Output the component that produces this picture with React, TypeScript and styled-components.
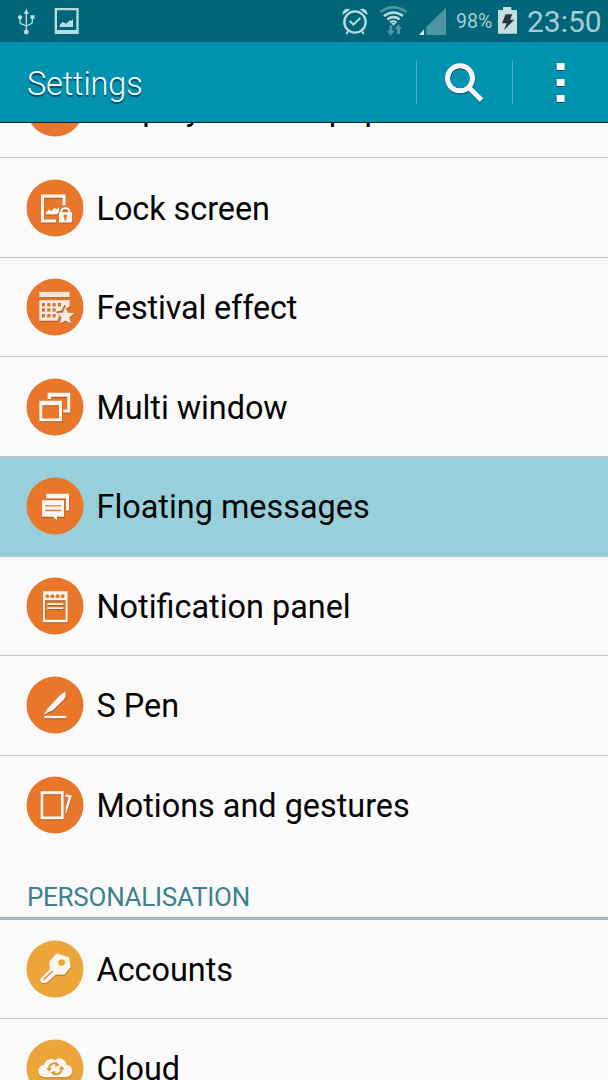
import React from 'react';
import styled, { createGlobalStyle } from 'styled-components';

const Global = createGlobalStyle`
  * { box-sizing: border-box; }
  html, body { margin: 0; padding: 0; overflow: hidden; background: #fafafa; }
  body { font-family: Roboto, "Noto Sans", sans-serif; }
`;

const Screen = styled.div`
  width: 608px;
  height: 1080px;
  display: flex;
  flex-direction: column;
  overflow: hidden;
  background: #fafafa;
`;

const StatusBar = styled.div`
  height: 42px;
  flex: none;
  display: flex;
  justify-content: space-between;
  background: #006579;
`;

const StatusGroup = styled.div<{ $width: number }>`
  width: ${p => p.$width}px;
  display: flex;
`;

const StatusText = styled.span<{ $width: number; $size: number }>`
  width: ${p => p.$width}px;
  flex: none;
  line-height: 43px;
  font-size: ${p => p.$size}px;
  white-space: nowrap;
  color: #a9ccd4;
`;

const Header = styled.header`
  height: 81px;
  flex: none;
  display: flex;
  align-items: center;
  padding-left: 27px;
  background: #0092ae;
  border-bottom: 1px solid #05293a;
  box-shadow: inset 0 -1px 0 #1a86a0;
`;

const Title = styled.h1`
  flex: 1;
  margin: 0;
  padding-top: 4px;
  font-size: 32.5px;
  font-weight: 300;
  letter-spacing: -0.15px;
  color: #f8fbfb;
  text-shadow: 0 2px 1px #04495c;
`;

const HeaderButton = styled.button`
  width: 96px;
  height: 44px;
  padding: 0;
  border: 0;
  border-left: 1px solid #4fb0c4;
  background: none;
  display: flex;
  align-items: center;
  justify-content: center;
`;

const Viewport = styled.main`
  flex: 1;
  min-height: 0;
  overflow: hidden;
`;

const List = styled.ul<{ $offset?: number }>`
  list-style: none;
  margin: ${p => p.$offset ?? 0}px 0 0;
  padding: 0;
`;

const Row = styled.li<{ $active?: boolean; $last?: boolean }>`
  height: ${p => (p.$last ? 98.2 : 99.6)}px;
  display: flex;
  align-items: center;
  gap: 12.5px;
  padding-left: 26px;
  background: ${p => (p.$active ? '#97d0da' : 'transparent')};
  border-bottom: ${p => (p.$last ? '0' : '1px')} solid #bcc3cd;
`;

const Label = styled.span<{ $spacing?: number }>`
  font-size: 32.4px;
  line-height: 40px;
  letter-spacing: ${p => (p.$spacing ? `${p.$spacing}px` : 'normal')};
  white-space: nowrap;
  color: #050505;
  padding-top: 2px;
`;

const SectionTitle = styled.h2`
  height: 65.8px;
  margin: 0;
  padding: 28px 0 0 27px;
  font-size: 26px;
  line-height: 30px;
  font-weight: 400;
  letter-spacing: -0.28px;
  color: #3c818d;
  border-bottom: 3px solid #9cbbc1;
`;

const Drawing = styled.svg`
  display: block;
  flex: none;
`;

const Relief = styled.g`
  filter: brightness(0);
  opacity: 0.25;
`;

type View = [number, number, number, number];

/* Artwork is drawn on a grid of three units to the pixel. */
function Glyph({ view, children }: { view: View; children: React.ReactNode }) {
  return (
    <Drawing width={view[2] / 3} height={view[3] / 3} viewBox={view.join(' ')}>
      {children}
    </Drawing>
  );
}

function Badge({ top, color, children }: { top: number; color: string; children?: React.ReactNode }) {
  return (
    <Glyph view={[48, top - 1.5, 174, 174]}>
      <circle cx="135" cy={top + 85.5} r="85.5" fill={color} />
      <Relief transform="translate(1 3)">{children}</Relief>
      {children}
    </Glyph>
  );
}

const orange = '#e8762b';
const amber = '#eba538';
const white = '#fbf6f1';

const lockArt = (
  <>
    <path d="M93 87H167V120H158V97H102V162H138V171H93Z" fill={white} />
    <path d="M108 147V141L117 132L123 137L133 127L140 131L147 125V139L141 147Z" fill={white} />
    <path d="M147 140H151V138C151 121 181 121 181 138V140H186V171H147ZM157 140H175V138C175 129 157 129 157 138Z" fill={white} fillRule="evenodd" />
    <path d="M163 156C158 151 161 147 166 147C171 147 174 151 169 156V165H163Z" fill={orange} />
  </>
);

const festivalArt = (
  <>
    <path d="M88 81H179V97H88Z" fill="#f7e7db" />
    <path d="M88 106H179V124L170 131L164 119L155 137L138 141L147 154L143 168H88ZM96 115V125H105V115ZM112 115V125H121V115ZM128 115V125H137V115ZM144 115V125H153V115ZM96 131V141H105V131ZM112 131V141H121V131ZM128 131V141H137V131ZM96 148V158H105V148ZM112 148V158H121V148ZM128 148V158H137V148Z" fill="#f7eadf" fillRule="evenodd" />
    <path d="M166 126L173 144L193 145L178 158L183 177L166 167L150 177L155 158L140 145L159 144Z" fill="#f4ebe4" />
  </>
);

const windowArt = (
  <>
    <path d="M113 382H181V441H160V432H172V394H123V401H113Z" fill={white} />
    <path d="M88 406H156V467H88ZM97 419V459H147V419Z" fill={white} fillRule="evenodd" />
  </>
);

const messageArt = (
  <>
    <path d="M109 87H177V137H168V101H109Z" fill={white} />
    <path d="M96 106H162V156H141V167L129 156H96Z" fill={white} />
    <path d="M105 123H153M105 137H153" stroke="#d77c42" strokeWidth="4" />
  </>
);

const panelArt = (
  <>
    <path d="M99 78H173V171H99ZM105 105V164H167V105Z" fill={white} fillRule="evenodd" />
    <g fill={orange}>
      <circle cx="112" cy="93" r="6" />
      <circle cx="127" cy="93" r="6" />
      <circle cx="143" cy="93" r="6" />
      <circle cx="158" cy="93" r="6" />
    </g>
    <path d="M112 117H160M112 129H160" stroke={white} strokeWidth="5" />
  </>
);

const penArt = (
  <>
    <path d="M165 381C168 387 168 397 162 405L127 439L112 444C108 449 104 451 104 447C105 444 109 442 110 436L118 426L149 394Z" fill={white} />
    <path d="M103 454H169V461H103Z" fill={white} />
  </>
);

const motionArt = (
  <>
    <path d="M92 79H161V163H92ZM100 88V155H153V88Z" fill={white} fillRule="evenodd" />
    <path d="M167 88L186 92L169 145H167V128L176 99L167 96Z" fill={white} />
  </>
);

const keyArt = (
  <>
    <path
      d="M137 71Q142 67 148 71L177 80L182 108Q182 112 178 115L166 130Q164 133 158 133L138 132L111 156Q105 160 93 156Q89 150 92 145L119 117L118 98Q118 94 120 91Z"
      fill={white}
    />
    <circle cx="155" cy="96" r="10" fill={amber} />
    <path d="M99 145L127 120L130 123L102 149Z" fill="#d69a3c" />
  </>
);

const cloudArt = (
  <>
    <path d="M105 442C80 442 78 408 103 405C105 389 124 383 136 391C148 378 169 390 169 405C192 407 193 440 169 442Z" fill={white} />
    <g fill="none" stroke="#e09a39" strokeWidth="6">
      <path d="M117 418C117 403 130 397 141 403" />
      <path d="M155 415C155 431 142 437 130 431" />
    </g>
    <path d="M108 415H126L117 426ZM146 419H164L155 408ZM138 396L149 407L135 411ZM133 438L122 427L136 423Z" fill="#e09a39" />
  </>
);

const displayRows = [
  { label: 'Display and wallpaper', top: 42, art: null },
  { label: 'Lock screen', top: 42, art: lockArt, spacing: -0.05 },
  { label: 'Festival effect', top: 41, art: festivalArt, spacing: -0.15 },
  { label: 'Multi window', top: 339, art: windowArt, spacing: -0.05 },
  { label: 'Floating messages', top: 38, art: messageArt, active: true },
  { label: 'Notification panel', top: 37, art: panelArt },
  { label: 'S Pen', top: 336, art: penArt },
  { label: 'Motions and gestures', top: 35, art: motionArt },
];

const personalRows = [
  { label: 'Accounts', top: 30, art: keyArt },
  { label: 'Cloud', top: 329, art: cloudArt },
];

export default function App() {
  const pale = '#b9dce2';
  return (
    <>
      <Global />
      <Screen>
        <StatusBar>
          <StatusGroup $width={100}>
            <Glyph view={[0, 0, 141, 126]}>
              <g fill={pale} stroke={pale}>
                <path d="M79 36V96M60 53V66Q60 71 65 72L79 78M97 52V65Q97 70 92 72L79 78" fill="none" strokeWidth="4" />
                <path d="M79 27L86 41H72ZM92 46H103V56H92Z" strokeWidth="1" />
                <circle cx="60" cy="52" r="6" />
                <circle cx="79" cy="96" r="7" />
              </g>
            </Glyph>
            <Glyph view={[141, 0, 108, 126]}>
              <path d="M164 24H236V102H164ZM171 31V90H229V31Z" fill={pale} fillRule="evenodd" />
              <path d="M179 81V75L188 65L198 71L210 61L215 62L219 57V81Z" fill={pale} />
            </Glyph>
          </StatusGroup>
          <StatusGroup $width={278}>
            <Glyph view={[0, 0, 129, 126]}>
              <g fill="none" stroke={pale}>
                <circle cx="75" cy="66" r="32" strokeWidth="7" />
                <path d="M59 63L70 74L91 54" strokeWidth="6" />
                <path d="M54 94L49 102M96 94L101 102" strokeWidth="6" />
              </g>
              <path d="M38 45C36 30 49 22 61 28ZM112 45C114 30 101 22 89 28Z" fill={pale} />
            </Glyph>
            <Glyph view={[129, 0, 120, 126]}>
              <g fill="none" strokeWidth="8">
                <path d="M151 36Q190 8 229 36" stroke="#4f96a4" />
                <path d="M162 48Q190 27 219 48" stroke={pale} />
                <path d="M172 58Q190 45 209 58" stroke={pale} />
                <path d="M180 67Q190 61 200 67" stroke={pale} strokeWidth="6" />
              </g>
              <path d="M184 70Q191 66 198 70L191 77Z" fill={pale} />
              <path d="M178 76H187V92H194L182 107L170 92H178ZM201 102V87H194L205 73L216 87H210V102Z" fill="#4f96a4" />
            </Glyph>
            <Glyph view={[249, 0, 129, 126]}>
              <path d="M348 23V105H289V81Z" fill="#4f96a4" />
              <path d="M282 88V105H267Z" fill="#dcecef" />
            </Glyph>
            <StatusText $width={41} $size={19.6}>98%</StatusText>
            <Glyph view={[501, 0, 90, 126]}>
              <path d="M504 30H519V21H544V30H561V101H504Z" fill="#c2dfe4" />
              <path d="M527 43H547L540 59H553L522 90L530 70H516Z" fill="#26363a" />
            </Glyph>
            <StatusText $width={80} $size={30}>23:50</StatusText>
          </StatusGroup>
        </StatusBar>
        <Header>
          <Title>Settings</Title>
          <HeaderButton aria-label="Search">
            <Glyph view={[132, 63, 126, 126]}>
              <g fill="none" stroke="#064c5e" strokeWidth="15" transform="translate(1 3)">
                <circle cx="180" cy="115" r="37.5" />
                <path d="M205 141L245 181" />
              </g>
              <g fill="none" stroke="#f6f8f8" strokeWidth="15">
                <circle cx="180" cy="115" r="37.5" />
                <path d="M205 141L245 181" />
              </g>
            </Glyph>
          </HeaderButton>
          <HeaderButton aria-label="More options">
            <Glyph view={[466, 63, 36, 126]}>
              <path d="M471 72H495V93H471ZM471 120H495V141H471ZM471 168H495V189H471Z" fill="#064c5e" />
              <path d="M471 69H495V90H471ZM471 117H495V138H471ZM471 165H495V186H471Z" fill="#f6f6f6" />
            </Glyph>
          </HeaderButton>
        </Header>
        <Viewport>
          <List $offset={-64.4}>
            {displayRows.map((row, i) => (
              <Row key={row.label} $active={row.active} $last={i === displayRows.length - 1}>
                <Badge top={row.top} color={orange}>{row.art}</Badge>
                <Label $spacing={row.spacing}>{row.label}</Label>
              </Row>
            ))}
          </List>
          <SectionTitle>PERSONALISATION</SectionTitle>
          <List $offset={-0.5}>
            {personalRows.map(row => (
              <Row key={row.label}>
                <Badge top={row.top} color={amber}>{row.art}</Badge>
                <Label>{row.label}</Label>
              </Row>
            ))}
          </List>
        </Viewport>
      </Screen>
    </>
  );
}
